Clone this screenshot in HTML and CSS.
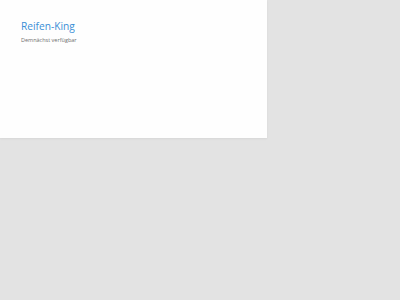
FILE: index.html
```html
<!DOCTYPE html>
<html lang="de">
<head>
  <meta charset="UTF-8" />
  <title>Reifen-King</title>
  <link rel="stylesheet" href="styles.css">
</head>
<body>
  <div class="panel">
    <h1 class="title">Reifen-King</h1>
    <p class="subtitle">Demnächst verfügbar</p>
  </div>
</body>
</html>
```

FILE: styles.css
```css
body {
  margin: 0;
  padding: 0;
  background: #e3e3e3;
  font-family: "Open Sans", "Liberation Sans", sans-serif;
  height: 300px;
}

.panel {
  width: 267px;
  height: 138px;
  box-sizing: border-box;
  padding: 19px 21px;
  background: #fefefe;
  box-shadow: 0 1px 2px rgba(0, 0, 0, 0.06);
}

.title {
  margin: 0;
  font-size: 10.2px;
  font-weight: 400;
  line-height: 14px;
  color: #3b8fd6;
}

.subtitle {
  margin: 3px 0 0;
  font-size: 5.5px;
  line-height: 8px;
  color: #6f6f6f;
}
```
